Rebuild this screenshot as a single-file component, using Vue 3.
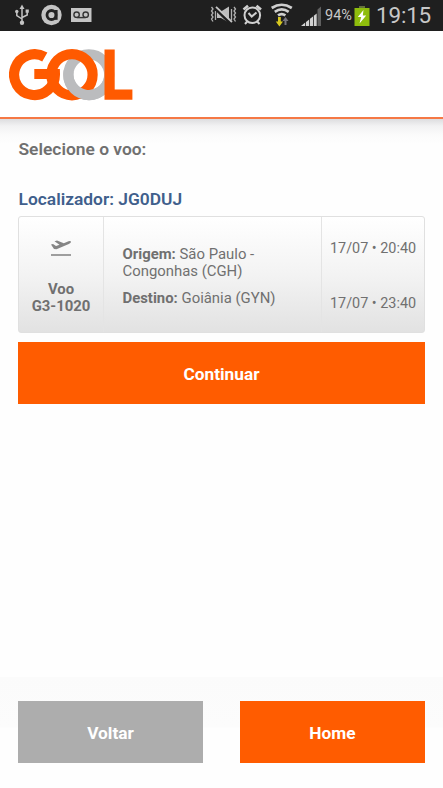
<script setup>
import { ref } from 'vue';

const selected = ref('JG0DUJ');
const flight = {
    number: 'G3-1020',
    from: 'São Paulo -',
    fromAirport: 'Congonhas (CGH)',
    to: 'Goiânia (GYN)',
    departure: '17/07 • 20:40',
    arrival: '17/07 • 23:40'
};
</script>
<template>
<div class="screen">
    <div class="status-bar">
        <svg class="left-icons" width="100" height="30" viewBox="0 0 100 30" fill="none">
            <g stroke="#c4c4c4" stroke-width="1.5">
                <path d="M22 8V22M16.8 12V15.5L22 19M27.2 11V15L22 17.5" />
            </g>
            <g fill="#c4c4c4">
                <path d="M22 4.5L24.5 9H19.5Z" />
                <circle cx="22" cy="22.7" r="2.2" />
                <circle cx="16.8" cy="11.5" r="1.7" />
                <rect x="25.6" y="9.5" width="3.2" height="3.2" />
                <circle cx="51.5" cy="15" r="10.2" />
                <rect x="71" y="8" width="20.5" height="14" />
            </g>
            <g stroke="#222" stroke-width="2.8">
                <circle cx="51.5" cy="15" r="4.5" />
                <path d="M56.2 10V19.8" />
            </g>
            <g stroke="#333" stroke-width="1.4">
                <circle cx="76.6" cy="14.7" r="2.7" />
                <circle cx="85.7" cy="14.7" r="2.7" />
                <path d="M76.6 17.6H85.7" />
            </g>
        </svg>
        <div class="right-side">
            <svg width="111" height="30" viewBox="210 0 111 30" fill="none">
                <g stroke="#b0b0b0" stroke-width="1.3">
                    <path d="M211.5 7L213 9L211.5 11L213 13L211.5 15L213 17L211.5 19L213 21.5M234 7L235.5 9L234 11L235.5 13L234 15L235.5 17L234 19L235.5 21.5" />
                    <path d="M215.5 11V20M231.5 9V20" />
                </g>
                <path d="M217 11.5H221L229 6.5V22.5L221 18H217Z" fill="#bdbdbd" />
                <path d="M215 8.5L230 23" stroke="#1f1f1f" stroke-width="2.5" />
                <path d="M216 6.8L232 22" stroke="#c6c6c6" stroke-width="1.8" />
                <g stroke="#d0d0d0" stroke-width="2">
                    <circle cx="252.3" cy="15.2" r="7.8" />
                    <path d="M248.5 13L251.7 16.5L256.5 12.5" />
                    <path d="M243.5 9.5L248 5.8M261 9.5L256.5 5.8" stroke-width="2.6" />
                    <path d="M247.2 21.5L245 24M257.2 21.5L259.5 24" />
                </g>
                <g stroke="#cfcfcf" stroke-width="2.7">
                    <path d="M271.7 8Q281.7 1.5 291.8 8M274.8 11.8Q281.7 7 288.7 11.8M278 15.4Q281.7 12.7 285.4 15.4" />
                </g>
                <path d="M278 17H280.8V21.5H283L279.4 26.5L275.8 21.5H278Z" fill="#d8c91f" />
                <path d="M284.5 25V21H282.5L285.5 17L288.5 21H286.5V25Z" fill="#77757c" />
                <g fill="#d2d2d2">
                    <path d="M301 26L305.2 22.6V26ZM306 22L309.2 19.4V26H306ZM310 18.8L313 16.4V26H310ZM313.8 15.7L316.7 13.4V26H313.8Z" />
                    <path d="M317.5 9.5L321 6.5V26H317.5Z" fill="#606060" />
                </g>
            </svg>
            <span class="percent">94%</span>
            <svg class="battery" width="16" height="20" viewBox="0 0 16 20">
                <path d="M5 0H11V2H15.5V20H.5V2H5Z" fill="#8fbd0c" />
                <path d="M5 0H11V2H5Z" fill="#65733b" />
                <path d="M9.5 4L3.8 11H7.2L5.5 17.5L12.2 9.5H8.8Z" fill="#fff" />
            </svg>
            <span class="clock">19:15</span>
        </div>
    </div>

    <div class="header">
        <svg class="logo" width="124" height="52" viewBox="9 49 124 52" fill="none" stroke-width="10.2" role="img" aria-label="GOL">
            <circle cx="88.8" cy="74.7" r="20.4" stroke="#bbbcbe" />
            <g stroke="#ff5a00">
                <path d="M44.8 57A20.4 20.4 0 1 0 54.9 74H34.3" />
                <circle cx="72" cy="74.7" r="20.6" />
            </g>
            <path d="M68.6 71A20.4 20.4 0 0 0 109 78" stroke="#bbbcbe" />
            <path d="M109.6 49.6V94.6H132.4" stroke="#ff5a00" />
        </svg>
    </div>

    <div class="content">
        <h1>Selecione o voo:</h1>
        <h2>Localizador: {{ selected }}</h2>

        <div class="flight">
            <div class="number">
                <svg width="22" height="18" viewBox="0 0 22 18">
                    <path d="M1 4.5L3 4L6 6L9.5 4.7L4.5 1.2L7 .5L13.8 3.2L18.5 1.3Q21 .7 21 2Q20.8 3 18.8 4L6.5 9.2L4 9Z" fill="#858585" />
                    <path d="M1 15H21" stroke="#949494" stroke-width="1.8" />
                </svg>
                <b>Voo</b>
                <b>{{ flight.number }}</b>
            </div>
            <div class="route">
                <p><b>Origem:</b> <span>{{ flight.from }}</span></p>
                <p>{{ flight.fromAirport }}</p>
                <p class="to"><b>Destino:</b> <span>{{ flight.to }}</span></p>
            </div>
            <div class="times">
                <span>{{ flight.departure }}</span>
                <span>{{ flight.arrival }}</span>
            </div>
        </div>

        <button>Continuar</button>
    </div>

    <div class="footer">
        <button class="back">Voltar</button>
        <button>Home</button>
    </div>
</div>
</template>
<style>
body{
    margin: 0;
    background: #fefefe;
}
</style>
<style scoped>
.screen{
    display: flex;
    flex-direction: column;
    height: 788px;
    font-family: Roboto, sans-serif;
    color: #707070;
    background: #fefefe;
    overflow: hidden;
}

.status-bar{
    display: flex;
    justify-content: space-between;
    align-items: flex-start;
    height: 31px;
    flex: none;
    background: #1f1f1f;
    color: #c8c8c8;
}
.status-bar svg{
    flex: none;
}
.right-side{
    display: flex;
    align-items: center;
    width: 233px;
    height: 30px;
}
.percent{
    width: 30px;
    margin-left: 4px;
    font-size: 14.5px;
}
.battery{
    margin: 1px 0 0 -1px;
}
.clock{
    margin-left: 6px;
    font-size: 22.5px;
    line-height: 30px;
    letter-spacing: -0.2px;
}

.header{
    height: 88px;
    flex: none;
    box-sizing: border-box;
    padding: 18px 9px 0;
    border-bottom: 2px solid #f57845;
    background: #fff;
}
.logo{
    display: block;
}

.content{
    flex: 1;
    padding: 0 18px;
    background: linear-gradient(#dddddf 0, #f2f2f3 7px, #fbfbfb 16px, #fefefe 25px);
}
h1, h2{
    margin: 0;
    padding-left: 0.5px;
    font-size: 17.4px;
    line-height: 22px;
    font-weight: 600;
}
h1{
    padding-top: 19px;
}
h2{
    margin: 28px 0 6px;
    color: #405f8c;
}

.flight{
    display: flex;
    box-sizing: border-box;
    height: 117px;
    border: 1px solid #e0e0e0;
    border-radius: 3px;
    background: linear-gradient(#fff, #f3f3f3 50%, #e2e2e2);
    font-size: 14.9px;
    line-height: 17.5px;
}
.number{
    display: flex;
    flex-direction: column;
    align-items: center;
    width: 85px;
    box-sizing: border-box;
    padding-top: 23px;
    border-right: 1px solid #e4e4e4;
}
.number svg{
    margin-bottom: 22.5px;
}
.route{
    width: 218px;
    box-sizing: border-box;
    padding: 28.5px 0 0 18.5px;
    border-right: 1px solid #e4e4e4;
}
.route p{
    margin: 0;
}
.route .to{
    margin-top: 9px;
}
.times{
    display: flex;
    flex-direction: column;
    gap: 38px;
    padding: 22.5px 0 0 8px;
    font-size: 14.4px;
    white-space: nowrap;
}

button{
    display: block;
    width: 100%;
    height: 62px;
    padding: 1px 0 0;
    border: none;
    background: #ff5c00;
    color: #fff;
    font: bold 17.3px Roboto, sans-serif;
}
.flight + button{
    margin-top: 9px;
}

.footer{
    display: flex;
    gap: 37px;
    height: 111px;
    flex: none;
    box-sizing: border-box;
    padding: 24px 18px 0;
    background: linear-gradient(#fbfbfb, #fcfcfc 50px, #fefefe 51px);
}
.back{
    background: #adadad;
}
</style>
